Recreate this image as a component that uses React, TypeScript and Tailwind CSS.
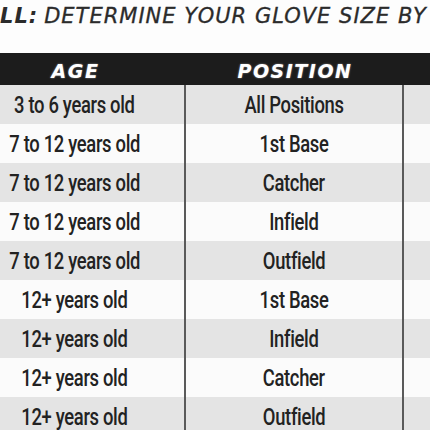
import React from "react";

const rows: [string, string][] = [
  ["3 to 6 years old", "All Positions"],
  ["7 to 12 years old", "1st Base"],
  ["7 to 12 years old", "Catcher"],
  ["7 to 12 years old", "Infield"],
  ["7 to 12 years old", "Outfield"],
  ["12+ years old", "1st Base"],
  ["12+ years old", "Infield"],
  ["12+ years old", "Catcher"],
  ["12+ years old", "Outfield"],
];

export default function App() {
  return (
    <div className="w-[430px] h-[430px] overflow-hidden bg-[#fdfdfd] relative">
      <div className="h-[53px] flex items-start pt-[2px] whitespace-nowrap text-[#2b2b2b] font-['DejaVu_Sans',sans-serif] italic text-[21px] leading-[28px] tracking-[1px]">
        <span className="font-bold">LL:</span>
        <span className="ml-[6px] [-webkit-text-stroke:0.3px_#2b2b2b]">DETERMINE YOUR GLOVE SIZE BY</span>
      </div>
      <div className="ml-[-35px] w-[500px]">
        <div className="grid grid-cols-[221px_218px_1fr] h-[32px] bg-[#1c1c1c] items-center text-white font-['DejaVu_Sans',sans-serif] font-bold italic text-[19px] leading-[32px] tracking-[1.5px] [text-shadow:0_0_2px_rgba(255,255,255,0.5)]">
          <div className="text-center pt-[2px]">AGE</div>
          <div className="text-center pt-[2px]">POSITION</div>
          <div></div>
        </div>
        {rows.map(([age, pos], i) => (
          <div
            key={i}
            className={`grid grid-cols-[221px_218px_1fr] h-[39px] items-center text-[#222] font-['Roboto',sans-serif] font-medium text-[23px] ${
              i % 2 === 0 ? "bg-[#e4e4e4]" : "bg-[#fbfbfb]"
            }`}
          >
            <div className="h-full flex items-center justify-center pt-[4px] border-r-2 border-[#5a5a5a] whitespace-nowrap">
              <span className="inline-block scale-x-[0.8] tracking-[-0.4px]">{age}</span>
            </div>
            <div className="h-full flex items-center justify-center pt-[4px] border-r-2 border-[#5a5a5a] whitespace-nowrap">
              <span className="inline-block scale-x-[0.8] tracking-[-0.4px]">{pos}</span>
            </div>
            <div></div>
          </div>
        ))}
      </div>
    </div>
  );
}
